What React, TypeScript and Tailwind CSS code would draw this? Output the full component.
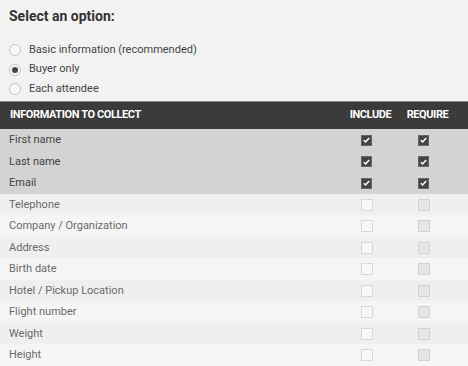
import { useState } from "react";

const fields = [
  { label: "First name", on: true },
  { label: "Last name", on: true },
  { label: "Email", on: true },
  { label: "Telephone", on: false },
  { label: "Company / Organization", on: false },
  { label: "Address", on: false },
  { label: "Birth date", on: false },
  { label: "Hotel / Pickup Location", on: false },
  { label: "Flight number", on: false },
  { label: "Weight", on: false },
  { label: "Height", on: false },
];

const options = ["Basic information (recommended)", "Buyer only", "Each attendee"];

const Check = ({ checked, dim }: { checked: boolean; dim?: boolean }) =>
  checked ? (
    <div className="w-[11px] h-[11px] bg-[#444] border border-[#666] flex items-center justify-center">
      <svg width="7" height="6" viewBox="0 0 7 6">
        <path d="M0.8 3.2 L2.6 4.9 L6.2 1" stroke="#fff" strokeWidth="1.5" fill="none" />
      </svg>
    </div>
  ) : (
    <div
      className={
        "w-[12px] h-[12px] border " +
        (dim ? "bg-[#e6e6e6] border-[#d2d2d2]" : "bg-[#f7f7f7] border-[#d8d8d8]")
      }
    />
  );

const App = () => {
  const [selected, setSelected] = useState(1);

  return (
    <div
      className="w-[468px] h-[366px] overflow-hidden bg-[#f2f2f2]"
      style={{ fontFamily: "Roboto, 'Liberation Sans', sans-serif" }}
    >
      <h2 className="pl-[9px] pt-[6px] text-[14px] font-bold text-[#333] leading-[20px]">
        Select an option:
      </h2>

      <div className="pt-[14px] pl-[9px] flex flex-col">
        {options.map((opt, i) => (
          <label
            key={opt}
            onClick={() => setSelected(i)}
            className="flex items-center h-[19.7px] text-[11px] text-[#444] cursor-pointer"
          >
            <span className="w-[12px] h-[12px] rounded-full border border-[#c4c4c4] bg-[#f8f8f8] flex items-center justify-center mr-[8px]">
              {selected === i && <span className="w-[6px] h-[6px] rounded-full bg-[#444]" />}
            </span>
            {opt}
          </label>
        ))}
      </div>

      <div className="mt-[2px]">
        <div className="flex items-center h-[28px] bg-[#3b3b3b] border-t border-[#8a8a8a] text-white text-[11px] font-bold tracking-[-0.4px]">
          <div className="flex-1 pl-[10px]">INFORMATION TO COLLECT</div>
          <div className="w-[57px] text-center">INCLUDE</div>
          <div className="w-[57px] text-center mr-[12px]">REQUIRE</div>
        </div>

        {fields.map((f, i) => (
          <div
            key={f.label}
            className={
              "flex items-center h-[21.5px] text-[11px] pt-[1px] " +
              (f.on
                ? "bg-[#d3d3d3] text-[#444]"
                : i % 2 === 1
                ? "bg-[#efefef] text-[#6a6a6a]"
                : "bg-[#f5f5f5] text-[#6a6a6a]")
            }
          >
            <div className="flex-1 pl-[9px]">{f.label}</div>
            <div className="w-[57px] flex justify-center">
              <Check checked={f.on} />
            </div>
            <div className="w-[57px] flex justify-center mr-[16px]">
              <Check checked={f.on} dim />
            </div>
          </div>
        ))}
      </div>
    </div>
  );
};

export default App;
